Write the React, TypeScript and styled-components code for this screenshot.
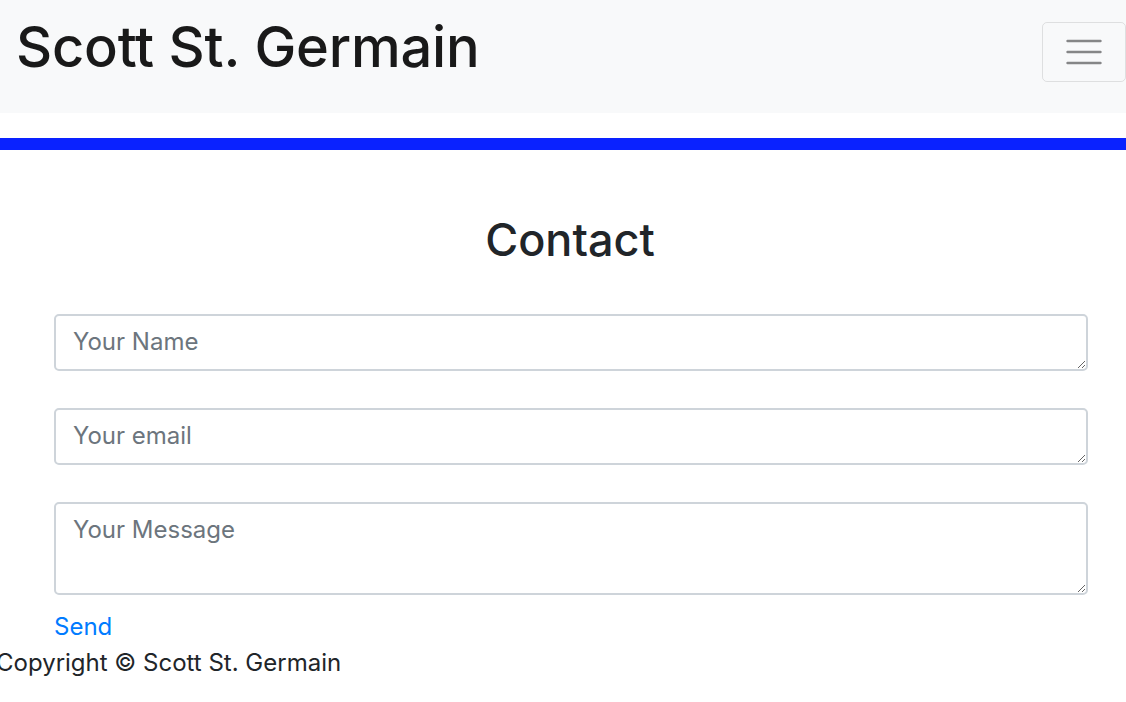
import React from "react";
import styled, { createGlobalStyle } from "styled-components";

const Global = createGlobalStyle`
  html, body { margin: 0; padding: 0; background: #fff; }
  body { font-family: Inter, "Noto Sans", sans-serif; color: #212529; overflow: hidden; }
  * { box-sizing: border-box; }
`;

const Navbar = styled.nav`
  height: 113px;
  background: #f8f9fa;
  display: flex;
  justify-content: space-between;
  align-items: flex-start;
  padding: 0 0 0 16px;
`;

const Brand = styled.a`
  font-size: 56px;
  font-weight: 500;
  line-height: 1;
  margin-top: 19px;
  color: rgba(0, 0, 0, 0.9);
  letter-spacing: -0.2px;
  text-decoration: none;
`;

const Toggler = styled.button`
  margin-top: 22px;
  width: 84px;
  height: 60px;
  background: transparent;
  border: 1.5px solid rgba(0, 0, 0, 0.1);
  border-radius: 5px;
  display: flex;
  align-items: center;
  justify-content: center;
  padding: 0;
`;

const Accent = styled.div`
  margin-top: 25px;
  height: 12px;
  background: #0a22ff;
`;

const Main = styled.main`
  padding: 0 38px 0 54px;
`;

const Heading = styled.h1`
  margin: 0;
  padding-top: 62px;
  text-align: center;
  font-size: 45px;
  font-weight: 500;
  line-height: 56px;
  color: #212529;
  transform: translateX(-1px);
`;

const Form = styled.form`
  margin-top: 46px;
  display: flex;
  flex-direction: column;
  gap: 37px;
`;

const Field = styled.textarea<{ $h: number }>`
  display: block;
  width: 100%;
  height: ${(p) => p.$h}px;
  padding: 8px 17px;
  border: 2px solid #ced4da;
  border-radius: 5px;
  font-family: Inter, "Noto Sans", sans-serif;
  font-size: 24px;
  line-height: 36px;
  color: #495057;
  background: #fff;
  resize: vertical;
  &::placeholder { color: #6c757d; }
`;

const SendLink = styled.a`
  display: block;
  margin-top: 14px;
  font-size: 24px;
  line-height: 36px;
  color: #007bff;
  text-decoration: none;
`;

const Footer = styled.footer`
  margin-left: -4px;
  font-size: 24px;
  line-height: 36px;
  color: #212529;
`;

export default function App() {
  return (
    <>
      <Global />
      <Navbar>
        <Brand href="#">Scott St. Germain</Brand>
        <Toggler aria-label="Toggle navigation">
          <svg width="36" height="26" viewBox="0 0 36 26">
            <g stroke="#858687" strokeWidth="2.4" strokeLinecap="round">
              <line x1="1.5" y1="2" x2="34.5" y2="2" />
              <line x1="1.5" y1="13" x2="34.5" y2="13" />
              <line x1="1.5" y1="24" x2="34.5" y2="24" />
            </g>
          </svg>
        </Toggler>
      </Navbar>
      <Accent />
      <Main>
        <Heading>Contact</Heading>
        <Form>
          <Field $h={57} rows={1} placeholder="Your Name" />
          <Field $h={57} rows={1} placeholder="Your email" />
          <Field $h={93} rows={3} placeholder="Your Message" />
        </Form>
        <SendLink href="#">Send</SendLink>
      </Main>
      <Footer>Copyright © Scott St. Germain</Footer>
    </>
  );
}
